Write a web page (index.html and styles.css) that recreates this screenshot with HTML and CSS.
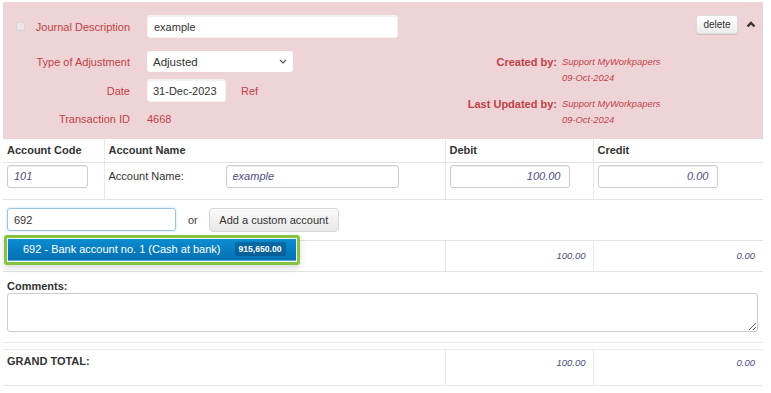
FILE: index.html
```html
<!DOCTYPE html>
<html lang="en">
<head>
    <meta charset="UTF-8">
    <title>Journal Entry</title>
    <link rel="stylesheet" href="styles.css">
</head>
<body>
    <div class="page">
        <h2 class="page-title">Adjusting Journal Entry - Update your existing journal by typing</h2>

        <!-- Journal header (error / unbalanced state) -->
        <div class="journal-panel">
            <div class="journal-form">
                <div class="field-row row-desc">
                    <div class="field-label">
                        <span class="fake-check"></span>
                        <span>Journal Description</span>
                    </div>
                    <input type="text" class="text-input desc-input" value="example">
                </div>
                <div class="field-row row-type">
                    <div class="field-label">Type of Adjustment</div>
                    <div class="select-box">
                        <span>Adjusted</span>
                        <svg width="8" height="5" viewBox="0 0 8 5"><polyline points="1,1 4,4 7,1" fill="none" stroke="#555" stroke-width="1.2"/></svg>
                    </div>
                </div>
                <div class="field-row row-date">
                    <div class="field-label">Date</div>
                    <input type="text" class="text-input date-input" value="31-Dec-2023">
                    <span class="ref-label">Ref</span>
                </div>
                <div class="field-row row-id">
                    <div class="field-label">Transaction ID</div>
                    <span class="id-value">4668</span>
                </div>
            </div>

            <div class="journal-meta">
                <div class="meta-label">Created by:</div>
                <div class="meta-value">Support MyWorkpapers</div>
                <div></div>
                <div class="meta-value">09-Oct-2024</div>
                <div class="meta-label">Last Updated by:</div>
                <div class="meta-value">Support MyWorkpapers</div>
                <div></div>
                <div class="meta-value">09-Oct-2024</div>
            </div>

            <div class="journal-actions">
                <button class="btn-delete">delete</button>
                <svg class="collapse-icon" width="10" height="7" viewBox="0 0 10 7"><polyline points="1.5,5.5 5,2 8.5,5.5" fill="none" stroke="#333" stroke-width="2.4"/></svg>
            </div>
        </div>

        <!-- Journal lines -->
        <table class="lines-table">
            <colgroup>
                <col class="col-code">
                <col class="col-name">
                <col class="col-debit">
                <col class="col-credit">
            </colgroup>
            <thead>
                <tr>
                    <th>Account Code</th>
                    <th>Account Name</th>
                    <th>Debit</th>
                    <th>Credit</th>
                </tr>
            </thead>
            <tbody>
                <tr class="line-row">
                    <td><input type="text" class="text-input italic code-input" value="101"></td>
                    <td>
                        <div class="name-cell">
                            <span class="name-label">Account Name:</span>
                            <input type="text" class="text-input italic name-input" value="example">
                        </div>
                    </td>
                    <td><input type="text" class="text-input italic amount-input" value="100.00"></td>
                    <td><input type="text" class="text-input italic amount-input" value="0.00"></td>
                </tr>
                <tr class="search-row">
                    <td colspan="4">
                        <div class="account-search">
                            <input type="text" class="text-input search-input" value="692">
                            <span class="or-text">or</span>
                            <button class="btn-custom">Add a custom account</button>

                            <div class="typeahead">
                                <div class="typeahead-item">
                                    <span>692 - Bank account no. 1 (Cash at bank)</span>
                                    <span class="balance-badge">915,650.00</span>
                                </div>
                            </div>
                        </div>
                    </td>
                </tr>
                <tr class="subtotal-row">
                    <td colspan="2"></td>
                    <td class="amount">100.00</td>
                    <td class="amount">0.00</td>
                </tr>
            </tbody>
        </table>

        <div class="comments-box">
            <div class="comments-label">Comments:</div>
            <textarea class="comments-input"></textarea>
        </div>

        <table class="total-table">
            <colgroup>
                <col class="col-total-label">
                <col class="col-debit">
                <col class="col-credit">
            </colgroup>
            <tr>
                <td class="total-label">GRAND TOTAL:</td>
                <td class="amount">100.00</td>
                <td class="amount">0.00</td>
            </tr>
        </table>
    </div>
</body>
</html>
```

FILE: styles.css
```css
* {
    box-sizing: border-box;
}

body {
    margin: 0;
    background: #fff;
    color: #333;
    font-family: "Liberation Sans", Arial, sans-serif;
    font-size: 11px;
}

.page {
    width: 763px;
    padding-left: 3px;
}

.page-title {
    margin: -16px 0 0;
    height: 18px;
    font-size: 16px;
    line-height: 16px;
    font-weight: bold;
    color: #222;
    white-space: nowrap;
}

/* ---- top panel ---- */
.journal-panel {
    display: flex;
    height: 137px;
    padding: 13px 7px 0 0;
    background: #efd4d7;
    color: #bf4246;
}

.journal-form {
    width: 395px;
}

.field-row {
    display: flex;
    align-items: center;
}

.field-label {
    width: 127px;
    margin-right: 17px;
    text-align: right;
}

.row-desc {
    height: 23px;
}

.row-desc .field-label {
    display: flex;
    align-items: center;
    justify-content: space-between;
    padding-left: 13px;
}

.fake-check {
    width: 9px;
    height: 9px;
    border: 1px solid #d9d0d1;
    border-radius: 2px;
    background: #eae6e6;
}

.row-type {
    height: 21px;
    margin-top: 13px;
}

.row-date {
    height: 23px;
    margin-top: 7px;
}

.row-id {
    height: 18px;
    margin-top: 8px;
}

.text-input {
    height: 23px;
    padding: 0 6px;
    border: 1px solid #ccc;
    border-radius: 3px;
    background: #fff;
    color: #333;
    font-family: inherit;
    font-size: 11px;
    box-shadow: inset 0 1px 1px rgba(0, 0, 0, 0.06);
    outline: none;
}

.text-input.italic {
    font-style: italic;
    color: #4e4d80;
}

.desc-input {
    width: 251px;
    border-color: #f3f3f3;
}

.select-box {
    width: 146px;
    height: 21px;
    display: flex;
    align-items: center;
    justify-content: space-between;
    padding: 0 6px 0 6px;
    border-radius: 3px;
    background: #fff;
    color: #333;
    font-size: 11.5px;
}

.date-input {
    width: 79px;
    padding: 0 5px;
    border-color: #f3f3f3;
}

.ref-label {
    margin-left: 15px;
}

.id-value {
    color: #bf4246;
}

.journal-meta {
    display: grid;
    grid-template-columns: 100px auto;
    grid-template-rows: 16px 16px 26px 16px;
    column-gap: 5px;
    align-items: end;
    height: max-content;
    margin: 39px 0 0 59px;
}

.meta-label {
    text-align: right;
    font-weight: bold;
    line-height: 16px;
}

.meta-value {
    font-style: italic;
    font-size: 9.4px;
    line-height: 16px;
}

.journal-actions {
    display: flex;
    align-items: flex-start;
    margin-left: auto;
}

.btn-delete {
    width: 42px;
    height: 19px;
    padding: 0;
    border: 1px solid #ddd;
    border-radius: 3px;
    background: linear-gradient(#fff, #ececec);
    color: #333;
    font-family: inherit;
    font-size: 10px;
    box-shadow: 0 1px 1px rgba(0, 0, 0, 0.12);
}

.collapse-icon {
    margin: 6px 0 0 8px;
}

/* ---- journal lines ---- */
.lines-table,
.total-table {
    width: 760px;
    border-collapse: collapse;
    table-layout: fixed;
}

.col-code { width: 101px; }
.col-name { width: 341px; }
.col-debit { width: 148px; }
.col-credit { width: 170px; }
.col-total-label { width: 442px; }

.lines-table th {
    height: 23px;
    padding: 0 4px;
    text-align: left;
    font-weight: bold;
    border-bottom: 1px solid #e2e2e2;
    border-left: 1px solid #e8e8e8;
}

.lines-table th:first-child,
.lines-table td:first-child {
    border-left: none;
}

.lines-table td {
    padding: 0 4px;
    border-bottom: 1px solid #e2e2e2;
    border-left: 1px solid #e8e8e8;
    vertical-align: top;
}

.line-row td {
    height: 37px;
    padding-top: 2px;
}

.code-input {
    width: 81px;
}

.name-cell {
    display: flex;
    align-items: flex-start;
}

.name-label {
    width: 117px;
    padding-top: 5px;
}

.name-input {
    width: 173px;
}

.amount-input {
    width: 120px;
    text-align: right;
    padding-right: 8px;
}

.search-row td {
    height: 41px;
    padding-top: 8px;
}

.account-search {
    position: relative;
    display: flex;
    align-items: center;
}

.search-input {
    width: 169px;
    border-color: #9cc3e6;
    box-shadow: 0 0 3px rgba(82, 168, 236, 0.35);
}

.or-text {
    margin-left: 12px;
    color: #444;
}

.btn-custom {
    width: 130px;
    height: 24px;
    margin-left: 11px;
    padding: 0;
    border: 1px solid #d8d8d8;
    border-radius: 4px;
    background: linear-gradient(#fafafa, #e8e8e8);
    color: #333;
    font-family: inherit;
    font-size: 11px;
}

.typeahead {
    position: absolute;
    left: -3px;
    top: 27px;
    width: 296px;
    height: 30px;
    padding: 1px;
    border: 3px solid #86c440;
    border-radius: 3px;
    background: #fff;
    z-index: 5;
    box-shadow: 0 3px 6px rgba(0, 0, 0, 0.15);
}

.typeahead-item {
    display: flex;
    align-items: center;
    height: 100%;
    padding-left: 15px;
    background: linear-gradient(#0a8dd0, #0470b3);
    border-bottom: 1px solid #5aa8d8;
    color: #fff;
    font-size: 11px;
}

.balance-badge {
    margin-left: 14px;
    padding: 2px 4px;
    border-radius: 2px;
    background: rgba(10, 50, 90, 0.35);
    font-size: 8.6px;
    font-weight: bold;
}

.subtotal-row td {
    height: 31px;
}

.amount {
    text-align: right;
    font-style: italic;
    font-size: 9.5px;
    color: #4e4d80;
    vertical-align: middle !important;
}

.lines-table .amount {
    padding-right: 7px;
}

.lines-table .amount:last-child {
    padding-right: 8px;
}

/* ---- comments ---- */
.comments-box {
    width: 760px;
    padding: 8px 4px 10px;
    border-bottom: 1px solid #ececec;
}

.comments-label {
    font-weight: bold;
    margin-bottom: 1px;
}

.comments-input {
    display: block;
    width: 751px;
    height: 39px;
    border: 1px solid #ccc;
    border-radius: 3px;
    resize: vertical;
}

.total-table {
    margin-top: 6px;
    border-top: 1px solid #ececec;
    border-bottom: 1px solid #e6e6e6;
}

.total-table td {
    height: 36px;
    padding: 5px 4px 0;
    vertical-align: top;
    border-left: 1px solid #e8e8e8;
}

.total-table td:first-child {
    border-left: none;
}

.total-label {
    font-weight: bold;
}

.total-table .amount {
    vertical-align: top !important;
    padding-top: 7px;
    padding-right: 7px;
}

.total-table .amount:last-child {
    padding-right: 8px;
}
```
